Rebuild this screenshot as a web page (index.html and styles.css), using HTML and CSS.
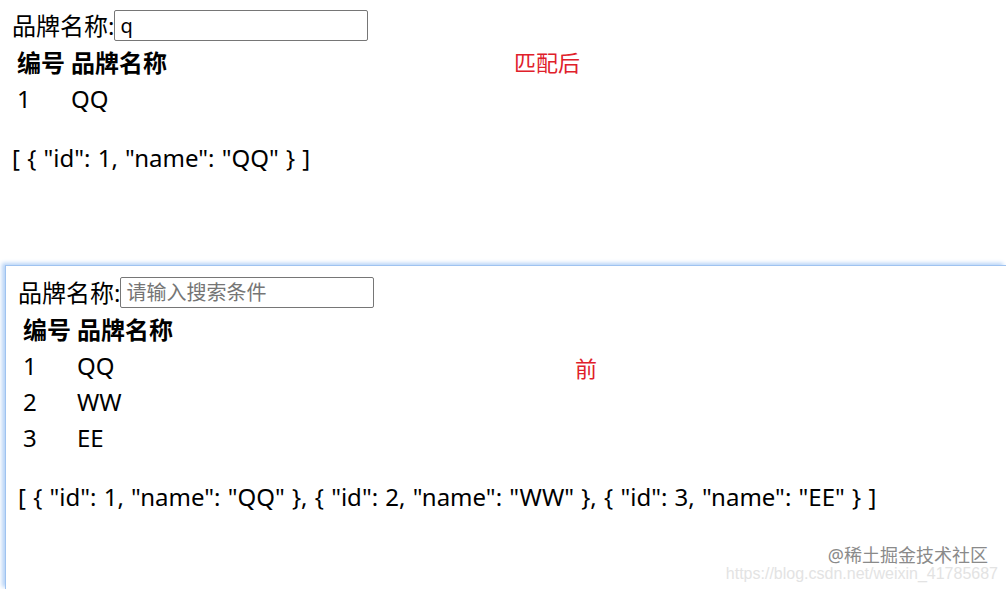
FILE: index.html
```html
<!DOCTYPE html>
<html lang="zh">
<head>
<meta charset="utf-8">
<title>品牌搜索</title>
<link rel="stylesheet" href="styles.css">
</head>
<body>
<div class="page">
  <section class="shot shot-top">
    <div class="search">
      <label class="label">品牌名称:</label><input class="field" type="text" value="q">
    </div>
    <table class="list">
      <thead><tr><th>编号</th><th>品牌名称</th></tr></thead>
      <tbody><tr><td>1</td><td>QQ</td></tr></tbody>
    </table>
    <p class="json">[ { "id": 1, "name": "QQ" } ]</p>
    <span class="note note-after">匹配后</span>
  </section>
  <section class="shot shot-bottom">
    <div class="search">
      <label class="label">品牌名称:</label><input class="field" type="text" placeholder="请输入搜索条件">
    </div>
    <table class="list">
      <thead><tr><th>编号</th><th>品牌名称</th></tr></thead>
      <tbody>
        <tr><td>1</td><td>QQ</td></tr>
        <tr><td>2</td><td>WW</td></tr>
        <tr><td>3</td><td>EE</td></tr>
      </tbody>
    </table>
    <p class="json">[ { "id": 1, "name": "QQ" }, { "id": 2, "name": "WW" }, { "id": 3, "name": "EE" } ]</p>
    <span class="note note-before">前</span>
    <div class="mark">
      <span class="mark-main">@稀土掘金技术社区</span>
      <span class="mark-url">https://blog.csdn.net/weixin_41785687</span>
    </div>
  </section>
</div>
</body>
</html>
```

FILE: styles.css
```css
* { box-sizing: border-box; }
html, body { margin: 0; padding: 0; background: #fff; }
body {
  font-family: "Noto Sans", "Noto Sans CJK SC", sans-serif;
  font-size: 24px;
  color: #000;
  width: 1006px;
  height: 589px;
  overflow: hidden;
}
.page { display: flex; flex-direction: column; height: 589px; }
.shot { position: relative; }
.shot-top { height: 265px; padding: 10px 12px 0; }
.shot-bottom {
  flex: 1;
  margin-left: 5px;
  padding: 11px 12px 0;
  border-top: 1px solid #9fc3f0;
  border-left: 1px solid #9fc3f0;
  box-shadow: -3px -2px 4px #b8d4f7;
}
.search { display: flex; align-items: center; height: 31px; }
.label { line-height: 31px; white-space: nowrap; }
.field {
  width: 254px;
  height: 31px;
  margin: 0;
  padding: 0 5px;
  border: 1px solid #767676;
  border-radius: 2px;
  font-family: "Noto Sans", "Noto Sans CJK SC", sans-serif;
  font-size: 20px;
  color: #000;
  outline: none;
}
.field::placeholder { color: #757575; }
.list { border-collapse: separate; border-spacing: 2px; margin-top: 3px; }
.list th, .list td {
  padding: 1px 3px;
  line-height: 32px;
  text-align: left;
  white-space: nowrap;
}
.list th { font-weight: 700; }
.list th:first-child, .list td:first-child { width: 52px; padding-right: 1px; }
.json { margin: 25px 0 0; line-height: 30px; white-space: nowrap; word-spacing: 1px; }
.note {
  position: absolute;
  color: #e0202a;
  font-size: 22px;
  line-height: 26px;
}
.note-after { left: 514px; top: 49px; }
.note-before { left: 569px; top: 89px; }
.mark { position: absolute; right: 8px; bottom: 4px; width: 290px; height: 40px; }
.mark-main {
  position: absolute;
  right: 10px;
  top: 0;
  font-size: 18px;
  color: #8a8a8a;
  line-height: 20px;
  white-space: nowrap;
}
.mark-url {
  position: absolute;
  right: 0;
  top: 20px;
  font-family: "Liberation Sans", sans-serif;
  font-size: 16px;
  color: #e3e3e3;
  line-height: 18px;
  white-space: nowrap;
}
```
